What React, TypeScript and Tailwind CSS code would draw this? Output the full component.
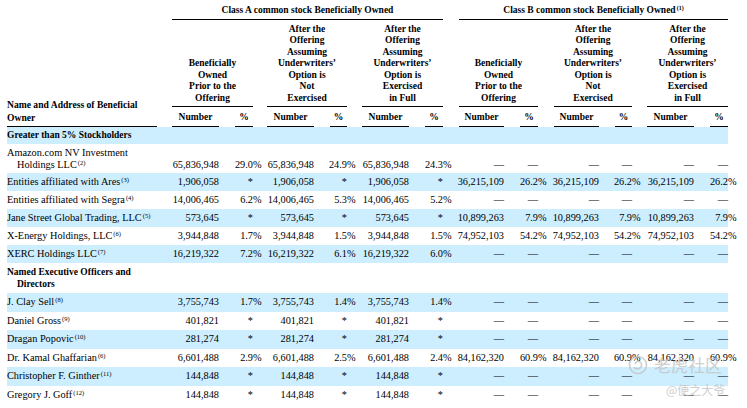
import React from "react";

const COLS =
  "grid grid-cols-[165px_47px_34px_61px_33px_62px_34px_61px_34px_61px_33px_62px_34px]";
const D = "—";
const SERIF = "font-['Liberation_Serif','Times_New_Roman',serif]";

function Sup({ n }: { n: string }) {
  return <sup className="text-[6.5px] ml-[1px]">({n})</sup>;
}

function Val({ v }: { v: string }) {
  if (v.endsWith("%")) {
    return (
      <>
        {v.slice(0, -1)}
        <span className="inline-block w-0">%</span>
      </>
    );
  }
  return <>{v}</>;
}

type RowT = {
  name: React.ReactNode;
  vals: string[];
  blue?: boolean;
  tall?: boolean;
  h: string;
};

const dashes = [D, D, D, D, D, D];

const rows1: RowT[] = [
  {
    name: (
      <>
        <div>Amazon.com NV Investment</div>
        <div className="pl-[10px]">
          Holdings LLC
          <Sup n="2" />
        </div>
      </>
    ),
    vals: ["65,836,948", "29.0%", "65,836,948", "24.9%", "65,836,948", "24.3%", ...dashes],
    tall: true,
    h: "h-[29px]",
  },
  {
    name: (
      <>
        Entities affiliated with Ares
        <Sup n="3" />
      </>
    ),
    vals: ["1,906,058", "*", "1,906,058", "*", "1,906,058", "*", "36,215,109", "26.2%", "36,215,109", "26.2%", "36,215,109", "26.2%"],
    blue: true,
    h: "h-[18px]",
  },
  {
    name: (
      <>
        Entities affiliated with Segra
        <Sup n="4" />
      </>
    ),
    vals: ["14,006,465", "6.2%", "14,006,465", "5.3%", "14,006,465", "5.2%", ...dashes],
    h: "h-[18px]",
  },
  {
    name: (
      <>
        Jane Street Global Trading, LLC
        <Sup n="5" />
      </>
    ),
    vals: ["573,645", "*", "573,645", "*", "573,645", "*", "10,899,263", "7.9%", "10,899,263", "7.9%", "10,899,263", "7.9%"],
    blue: true,
    h: "h-[18px]",
  },
  {
    name: (
      <>
        X-Energy Holdings, LLC
        <Sup n="6" />
      </>
    ),
    vals: ["3,944,848", "1.7%", "3,944,848", "1.5%", "3,944,848", "1.5%", "74,952,103", "54.2%", "74,952,103", "54.2%", "74,952,103", "54.2%"],
    h: "h-[18px]",
  },
  {
    name: (
      <>
        XERC Holdings LLC
        <Sup n="7" />
      </>
    ),
    vals: ["16,219,322", "7.2%", "16,219,322", "6.1%", "16,219,322", "6.0%", ...dashes],
    blue: true,
    h: "h-[18px]",
  },
];

const rows2: RowT[] = [
  {
    name: (
      <>
        J. Clay Sell
        <Sup n="8" />
      </>
    ),
    vals: ["3,755,743", "1.7%", "3,755,743", "1.4%", "3,755,743", "1.4%", ...dashes],
    blue: true,
    h: "h-[18.5px]",
  },
  {
    name: (
      <>
        Daniel Gross
        <Sup n="9" />
      </>
    ),
    vals: ["401,821", "*", "401,821", "*", "401,821", "*", ...dashes],
    h: "h-[18.5px]",
  },
  {
    name: (
      <>
        Dragan Popovic
        <Sup n="10" />
      </>
    ),
    vals: ["281,274", "*", "281,274", "*", "281,274", "*", ...dashes],
    blue: true,
    h: "h-[18.5px]",
  },
  {
    name: (
      <>
        Dr. Kamal Ghaffarian
        <Sup n="6" />
      </>
    ),
    vals: ["6,601,488", "2.9%", "6,601,488", "2.5%", "6,601,488", "2.4%", "84,162,320", "60.9%", "84,162,320", "60.9%", "84,162,320", "60.9%"],
    h: "h-[18.5px]",
  },
  {
    name: (
      <>
        Christopher F. Ginther
        <Sup n="11" />
      </>
    ),
    vals: ["144,848", "*", "144,848", "*", "144,848", "*", ...dashes],
    blue: true,
    h: "h-[18.5px]",
  },
  {
    name: (
      <>
        Gregory J. Goff
        <Sup n="12" />
      </>
    ),
    vals: ["144,848", "*", "144,848", "*", "144,848", "*", ...dashes],
    h: "h-[18.5px]",
  },
];

function DataRow({ r }: { r: RowT }) {
  return (
    <div
      className={`${COLS} ${r.h} ${r.blue ? "bg-[#cceeff]" : ""} ${
        r.tall ? "items-end pb-[2px]" : "items-center"
      } text-[10.3px] leading-[12px]`}
    >
      <div>{r.name}</div>
      {r.vals.map((v, i) => (
        <div key={i} className="text-right whitespace-nowrap">
          <Val v={v} />
        </div>
      ))}
    </div>
  );
}

const groupHeads: { lines: string[]; cls: string }[] = [
  { lines: ["Beneficially", "Owned", "Prior to the", "Offering"], cls: "col-span-2" },
  {
    lines: ["After the", "Offering", "Assuming", "Underwriters’", "Option is", "Not", "Exercised"],
    cls: "col-span-2 ml-[14px]",
  },
  {
    lines: ["After the", "Offering", "Assuming", "Underwriters’", "Option is", "Exercised", "in Full"],
    cls: "col-span-2 ml-[15px]",
  },
  { lines: ["Beneficially", "Owned", "Prior to the", "Offering"], cls: "col-span-2 ml-[16px]" },
  {
    lines: ["After the", "Offering", "Assuming", "Underwriters’", "Option is", "Not", "Exercised"],
    cls: "col-span-2 ml-[16px]",
  },
  {
    lines: ["After the", "Offering", "Assuming", "Underwriters’", "Option is", "Exercised", "in Full"],
    cls: "col-span-2 ml-[15px]",
  },
];

const numW = ["w-[47px]", "w-[47px]", "w-[47px]", "w-[45px]", "w-[45px]", "w-[47px]"];
const pctW = ["w-[18px]", "w-[17px]", "w-[18px]", "w-[18px]", "w-[17px]", "w-[18px]"];

export default function App() {
  return (
    <div className={`relative w-[747px] h-[408px] overflow-hidden bg-white text-black ${SERIF}`}>
      <div className="pl-[7px] w-[728px]">
        {/* Header */}
        <div className={`${COLS} grid-rows-[20px_87px_20px] font-bold text-[9.5px]`}>
          <div className="row-start-2 row-span-2 flex flex-col justify-end">
            <div className="w-[150px] border-b border-black pb-[2px] leading-[12.4px] text-[9.6px]">
              Name and Address of Beneficial
              <br />
              Owner
            </div>
          </div>
          <div className="row-start-1 col-start-2 col-span-6 flex flex-col justify-end">
            <div className="border-b border-black text-center leading-[12px] pb-[3px]">
              Class A common stock Beneficially Owned
            </div>
          </div>
          <div className="row-start-1 col-start-8 col-span-6 flex flex-col justify-end ml-[16px]">
            <div className="border-b border-black text-center leading-[12px] pb-[3px]">
              Class B common stock Beneficially Owned<sup className="text-[6px] ml-[1px]">(1)</sup>
            </div>
          </div>
          {groupHeads.map((g, i) => (
            <div key={i} className={`row-start-2 ${g.cls} flex flex-col justify-end`}>
              <div className="border-b border-black text-center leading-[11.5px] pb-[2px]">
                {g.lines.map((l, j) => (
                  <div key={j}>{l}</div>
                ))}
              </div>
            </div>
          ))}
          {numW.map((w, i) => (
            <React.Fragment key={i}>
              <div className="row-start-3 flex flex-col justify-end">
                <div className={`ml-auto ${w} border-b border-black text-center leading-[12px] pb-[3px]`}>
                  Number
                </div>
              </div>
              <div className="row-start-3 flex flex-col justify-end">
                <div className={`ml-auto ${pctW[i]} border-b border-black text-center leading-[12px] pb-[3px]`}>
                  %
                </div>
              </div>
            </React.Fragment>
          ))}
        </div>

        {/* Section 1 */}
        <div className="h-[17px] bg-[#cceeff] flex items-center font-bold text-[9.5px]">
          Greater than 5% Stockholders
        </div>
        {rows1.map((r, i) => (
          <DataRow key={i} r={r} />
        ))}

        {/* Section 2 */}
        <div className="h-[30px] flex flex-col justify-center font-bold text-[9.5px] leading-[12.4px]">
          <div>Named Executive Officers and</div>
          <div className="pl-[10px]">Directors</div>
        </div>
        {rows2.map((r, i) => (
          <DataRow key={i} r={r} />
        ))}
      </div>

      {/* Watermark */}
      <div className="absolute left-[628px] top-[355px] flex items-center gap-[6px] text-[#c4c4c4] opacity-80 pointer-events-none">
        <svg width="20" height="20" viewBox="0 0 20 20" fill="none" stroke="#c4c4c4" strokeWidth="1.6">
          <circle cx="10" cy="10" r="8.5" />
          <path d="M6 12.5c1.5 1.8 5 2 6.8-0.2 1.6-2 0.8-5.2-1.8-5.8-2-0.5-3.8 0.8-3.8 2.6" />
        </svg>
        <span className="text-[17px] leading-[20px] font-['Noto_Sans_CJK_SC',sans-serif]">老虎社区</span>
      </div>
      <div className="absolute left-[666px] top-[383px] text-[12px] leading-[14px] text-[#c4c4c4] opacity-80 font-['Noto_Sans_CJK_SC',sans-serif] pointer-events-none">
        @便之大爷
      </div>
    </div>
  );
}
